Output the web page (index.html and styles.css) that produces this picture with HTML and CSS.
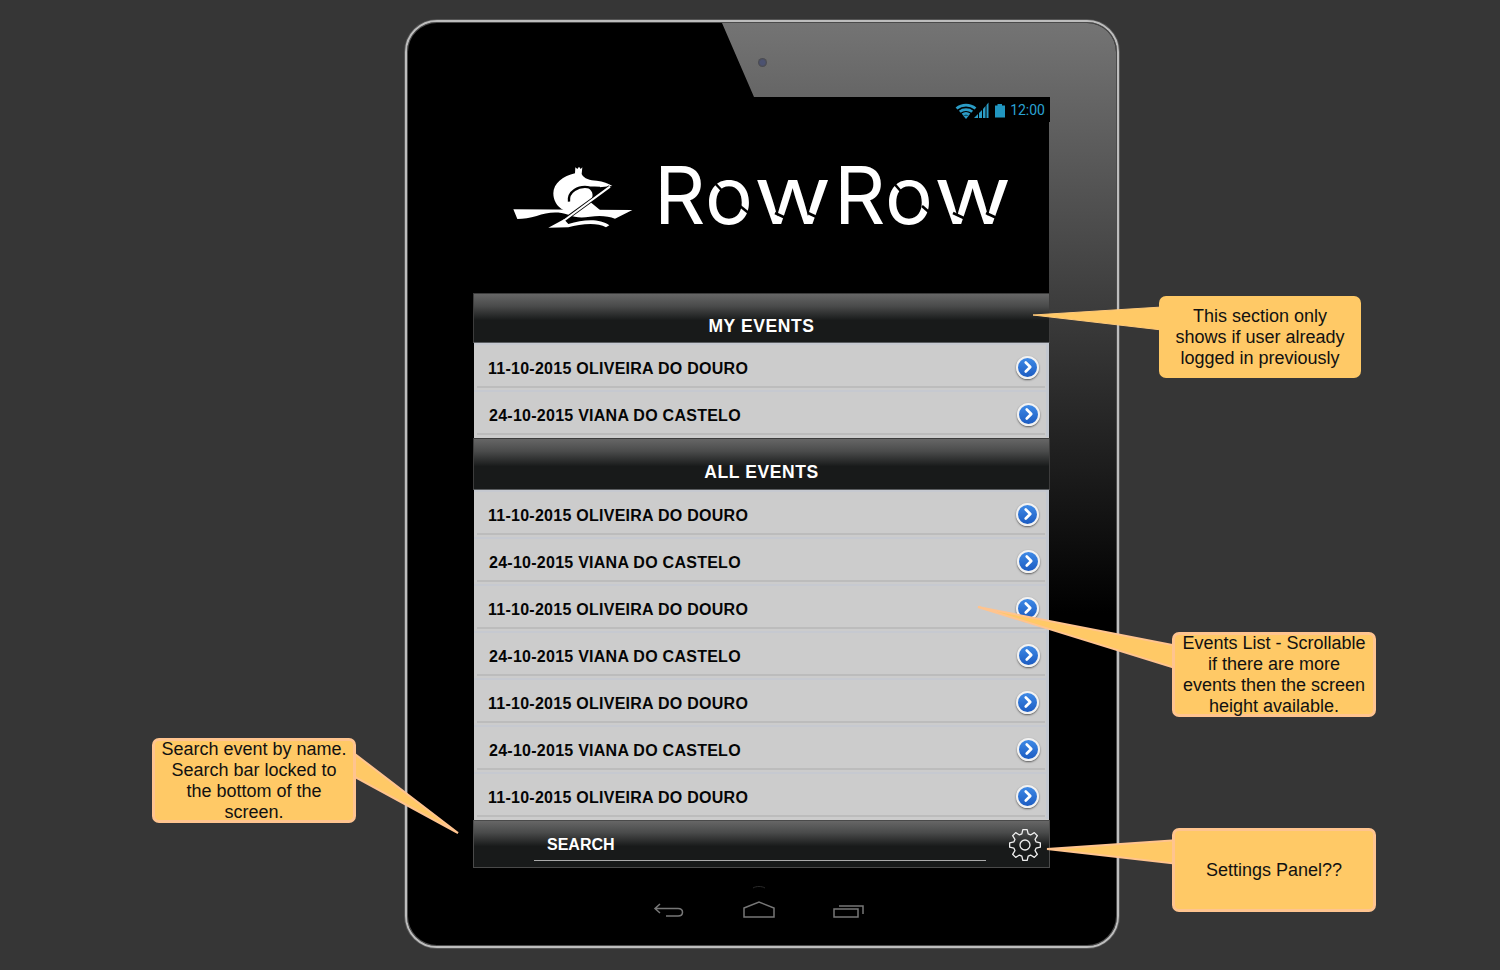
FILE: index.html
```html
<!DOCTYPE html>
<html lang="en">
<head>
<meta charset="utf-8">
<title>RowRow wireframe</title>
<link rel="stylesheet" href="styles.css">
</head>
<body>
<svg width="0" height="0" class="defs">
  <symbol id="chev" viewBox="0 0 20 20"><path d="M7.5 5 L12.5 10 L7.5 15" fill="none" stroke="#fff" stroke-width="3" stroke-linecap="round" stroke-linejoin="round"/></symbol>
</svg>
<main class="stage">
  <div class="device">
    <span class="camera"></span>
    <section class="screen">
      <div class="status">
        <svg class="st-icons" width="50" height="18" viewBox="0 0 50 18">
          <g fill="none" stroke="#2b9cc6" stroke-width="2.800">
            <path d="M1.500 6.500 C7 2 15 2 20.500 6.500"/>
            <path d="M4.800 9.800 C8 7 14 7 17.200 9.800"/>
            <path d="M7.500 12.600 C9.500 11.200 12.500 11.200 14.500 12.600"/>
          </g>
          <path d="M8 13.500 L14 13.500 L11 17 Z" fill="#2b9cc6"/>
          <path d="M19 16 L23 12 V16Z M24 16 V11 L27 8 V16Z M28 16 V7 L30.500 4 V16Z M31.500 16 V3 L33.500 0.500 V16Z" fill="#2b9cc6"/>
          <path d="M40 3.500 H42.500 V2 H47 V3.500 H50 V15.500 H40Z" fill="#2196c0"/>
        </svg>
        <span class="clock">12:00</span>
      </div>
      <div class="logo">
        <svg class="rower" width="130" height="70" viewBox="30 45 390 210">
          <path fill="#fff" d="M225 70 L226 52 L232 57 L237 50 L242 57 L247 52 L245 72 C252 86 270 92 290 92 C310 94 325 100 337 108 L298 112 C285 112 275 112 265 115 C280 125 282 140 270 155 L300 180 L190 180 C170 170 160 150 160 130 C160 100 190 78 225 70Z"/>
          <path fill="none" stroke="#000" stroke-width="7" d="M207 155 C203 125 235 106 268 112 L300 114"/>
          <path fill="#fff" d="M40 178 L397 180 L345 206 C325 198 300 196 270 200 C245 204 225 203 205 194 C170 183 140 188 110 198 C90 204 70 207 52 207Z"/>
          <path fill="none" stroke="#000" stroke-width="11" d="M330 110 L188 214"/>
          <path fill="none" stroke="#fff" stroke-width="6" d="M330 110 L190 213"/>
          <path fill="#fff" d="M192 208 L145 233 L205 232 C240 222 290 215 318 232 L328 226 C300 205 250 208 205 222Z"/>
        </svg>
        <span class="wordmark"><span class="ch r">R</span><span class="ch o">o</span><span class="ch w"><span class="wide">w</span></span><span class="ch r">R</span><span class="ch o">o</span><span class="ch w"><span class="wide">w</span></span></span>
        <svg class="cuts" width="577" height="171" viewBox="473 122 577 171">
          <g stroke="#000" stroke-width="2.500" fill="none">
            <path d="M712 180 L727 196"/>
            <path d="M740 206 L756 219"/>
            <path d="M891 180 L905 196"/>
            <path d="M922 206 L937 219"/>
            <path d="M775 213 L790 220"/>
            <path d="M808 213 L823 220"/>
            <path d="M953 213 L968 220"/>
            <path d="M986 213 L1001 220"/>
          </g>
        </svg>
      </div>
      <h2 class="bar">MY EVENTS</h2>
      <ul class="list first">
        <li class="row"><span>11-10-2015 OLIVEIRA DO DOURO</span><i class="go"><svg width="18" height="18"><use href="#chev"/></svg></i></li>
        <li class="row even"><span>24-10-2015 VIANA DO CASTELO</span><i class="go"><svg width="18" height="18"><use href="#chev"/></svg></i></li>
      </ul>
      <h2 class="bar tall">ALL EVENTS</h2>
      <ul class="list fill">
        <li class="row"><span>11-10-2015 OLIVEIRA DO DOURO</span><i class="go"><svg width="18" height="18"><use href="#chev"/></svg></i></li>
        <li class="row even"><span>24-10-2015 VIANA DO CASTELO</span><i class="go"><svg width="18" height="18"><use href="#chev"/></svg></i></li>
        <li class="row"><span>11-10-2015 OLIVEIRA DO DOURO</span><i class="go"><svg width="18" height="18"><use href="#chev"/></svg></i></li>
        <li class="row even"><span>24-10-2015 VIANA DO CASTELO</span><i class="go"><svg width="18" height="18"><use href="#chev"/></svg></i></li>
        <li class="row"><span>11-10-2015 OLIVEIRA DO DOURO</span><i class="go"><svg width="18" height="18"><use href="#chev"/></svg></i></li>
        <li class="row even"><span>24-10-2015 VIANA DO CASTELO</span><i class="go"><svg width="18" height="18"><use href="#chev"/></svg></i></li>
        <li class="row"><span>11-10-2015 OLIVEIRA DO DOURO</span><i class="go"><svg width="18" height="18"><use href="#chev"/></svg></i></li>
      </ul>
      <div class="search">
        <div class="field">SEARCH</div>
        <svg class="gear" width="36" height="36" viewBox="-18 -18 36 36">
          <polygon fill="none" stroke="#eee" stroke-width="1.300" stroke-linejoin="round" points="-2.16,15.35 2.16,15.35 3.17,11.05 5.58,10.06 9.33,12.38 12.38,9.33 10.06,5.58 11.05,3.17 15.35,2.16 15.35,-2.16 11.05,-3.17 10.06,-5.58 12.38,-9.33 9.33,-12.38 5.58,-10.06 3.17,-11.05 2.16,-15.35 -2.16,-15.35 -3.17,-11.05 -5.58,-10.06 -9.33,-12.38 -12.38,-9.33 -10.06,-5.58 -11.05,-3.17 -15.35,-2.16 -15.35,2.16 -11.05,3.17 -10.06,5.58 -12.38,9.33 -9.33,12.38 -5.58,10.06 -3.17,11.05"/>
          <circle r="5" fill="none" stroke="#eee" stroke-width="1.300"/>
        </svg>
      </div>
    </section>
    <nav class="softkeys">
      <svg width="32" height="18" viewBox="0 0 32 18"><path d="M7 3 L2 7.500 L7 12 M2 7.500 H25 C31 7.500 31 15 25 15 H13" fill="none" stroke="#777" stroke-width="1.500"/></svg>
      <svg class="home" width="32" height="18" viewBox="0 0 32 18"><path d="M1 7 L16 1 L31 7 V16 H1Z" fill="none" stroke="#777" stroke-width="1.500"/><path d="M10 -13 C13 -15 19 -15 22 -13" fill="none" stroke="#2a2a2a"/></svg>
      <svg width="32" height="18" viewBox="0 0 32 18"><path d="M1 8 H25 V16 H1Z M6 5 H30 V13" fill="none" stroke="#777" stroke-width="1.500"/></svg>
    </nav>
  </div>

  <svg class="tails" width="1500" height="970" viewBox="0 0 1500 970">
    <polygon class="tail flat" points="1033,315 1162,307 1162,330"/>
    <polygon class="tail" points="978,607 1178,646 1178,669"/>
    <polygon class="tail" points="1047,849 1178,840 1178,864"/>
    <polygon class="tail" points="458,833 351,751 351,775"/>
  </svg>
  <p class="note note-a">This section only shows if user already logged in previously</p>
  <p class="note edged note-b">Events List - Scrollable if there are more events then the screen height available.</p>
  <p class="note edged note-c">Settings Panel??</p>
  <p class="note edged note-d">Search event by name. Search bar locked to the bottom of the screen.</p>
</main>
</body>
</html>
```
FILE: styles.css
```css
* { box-sizing: border-box; }
html, body { margin: 0; padding: 0; }
body { background: #363636; font-family: "Liberation Sans", Arial, sans-serif; }
.defs { position: absolute; }
.stage { position: relative; width: 1500px; height: 970px; overflow: hidden; padding: 20px 0 0 405px; }

.device {
  position: relative;
  width: 714px;
  height: 928px;
  padding: 75px 0 0 66px;
  background: #000;
  border: 2px solid #bdbdbd;
  border-radius: 32px;
  box-shadow: 0 0 0 1px #555, inset 0 0 0 1px #4a4a4a;
}
.device::before {
  content: "";
  position: absolute;
  inset: 1px;
  border-radius: 29px;
  background: linear-gradient(#747474 0, #000 590px);
  clip-path: polygon(314px 0, 100% 0, 100% 620px, 346px 620px, 346px 74px);
}
.camera {
  position: absolute;
  left: 351px;
  top: 36px;
  width: 9px;
  height: 9px;
  border-radius: 50%;
  background: radial-gradient(circle, #4c5270 0 35%, #4a4a4c 70%);
}

.screen { position: relative; width: 577px; height: 771px; display: flex; flex-direction: column; }
.status {
  height: 25px;
  background: #000;
  display: flex;
  align-items: center;
  justify-content: flex-end;
  padding-right: 5px;
  margin-left: 281px;
}
.st-icons { margin-right: 5px; margin-top: 2px; }
.clock { font-family: Roboto, sans-serif; font-size: 14px; color: #2aa2d2; }
.logo {
  position: relative;
  height: 171px;
  margin-right: 1px;
  background: #000;
  display: flex;
  align-items: flex-start;
  padding: 43px 0 0 37px;
}
.rower { flex: none; }
.wordmark {
  display: flex;
  font-family: Inter, sans-serif;
  font-weight: 400;
  font-size: 80px;
  line-height: 62px;
  color: #fff;
  margin-left: 14px;
  margin-top: -1px;
}
.ch { display: block; }
.ch.r { width: 51px; }
.ch.o { width: 49px; }
.ch.w { width: 80px; }
.wide { display: block; transform: scaleX(1.18); transform-origin: 0 50%; }
.cuts { position: absolute; left: 0; top: 0; }

.bar {
  margin: 0;
  height: 50px;
  display: flex;
  align-items: flex-end;
  justify-content: center;
  padding-bottom: 6px;
  font-size: 17.500px;
  line-height: 20px;
  font-weight: 700;
  letter-spacing: .6px;
  color: #fff;
  background: linear-gradient(#666 0, #4a4b4b 25%, #181a1a 55%, #181a1a 100%);
  border: 1px solid #3c3c3c;
  border-bottom-color: #5a5d60;
}
.bar.tall { height: 52px; padding-bottom: 7px; }
.list { list-style: none; margin: 0 1px; padding: 0; background: #ccc; }
.list.first { padding-bottom: 1px; }
.list.fill { flex: 1; overflow: hidden; }
.row {
  height: 47px;
  display: flex;
  align-items: center;
  justify-content: space-between;
  padding: 5px 7px 0 14px;
  background: linear-gradient(#c6c9d0, #c6c9d0) 0 0 / 100% 2px no-repeat,
              linear-gradient(#bcbcbc, #bcbcbc) 3px 43px / 568px 2px no-repeat,
              #cccccc;
  border-right: 3px solid #c3c8d0;
  font-size: 16px;
  letter-spacing: .26px;
  font-weight: 700;
  color: #050505;
}
.row.even { padding-left: 15px; padding-right: 6px; }
.go {
  width: 23px;
  height: 23px;
  margin-top: -4px;
  border-radius: 50%;
  border: 2px solid #f2f2f2;
  background: linear-gradient(#3f8ae6, #1c5cc2);
  box-shadow: 0 1px 2px rgba(0,0,0,.55);
  display: flex;
  align-items: center;
  justify-content: center;
}
.search {
  height: 48px;
  display: flex;
  align-items: flex-end;
  padding: 0 0 6px 60px;
  background: linear-gradient(#666 0, #4a4b4b 25%, #181a1a 55%, #181a1a 100%);
  border: 1px solid #4a4a4a;
  color: #fff;
}
.field {
  width: 452px;
  padding: 0 0 6px 13px;
  font-size: 16px;
  line-height: 19px;
  font-weight: 700;
  border-bottom: 1px solid #aaa;
}
.gear { margin: 0 0 -2px 21px; }

.softkeys {
  display: flex;
  justify-content: center;
  gap: 58px;
  width: 577px;
  padding: 33px 5px 0 0;
}
.home { overflow: visible; }

.tails { position: absolute; left: 0; top: 0; }
.tail { fill: #ffc966; stroke: #ffc48f; stroke-width: 2; }
.tail.flat { stroke: #ffc97a; stroke-width: 1; }
.note {
  position: absolute;
  margin: 0;
  width: 204px;
  display: flex;
  align-items: center;
  justify-content: center;
  text-align: center;
  background: #ffc966;
  color: #111;
  font-size: 18px;
  line-height: 21px;
  border-radius: 7px;
}
.note.edged { border: 3px solid #ffc48f; }
.note-a { left: 1159px; top: 296px; width: 202px; height: 82px; padding: 1px 12px 0; }
.note-b { left: 1172px; top: 632px; height: 85px; padding: 0 4px; }
.note-c { left: 1172px; top: 828px; height: 84px; }
.note-d { left: 152px; top: 738px; height: 85px; padding: 0 5px; }
```
